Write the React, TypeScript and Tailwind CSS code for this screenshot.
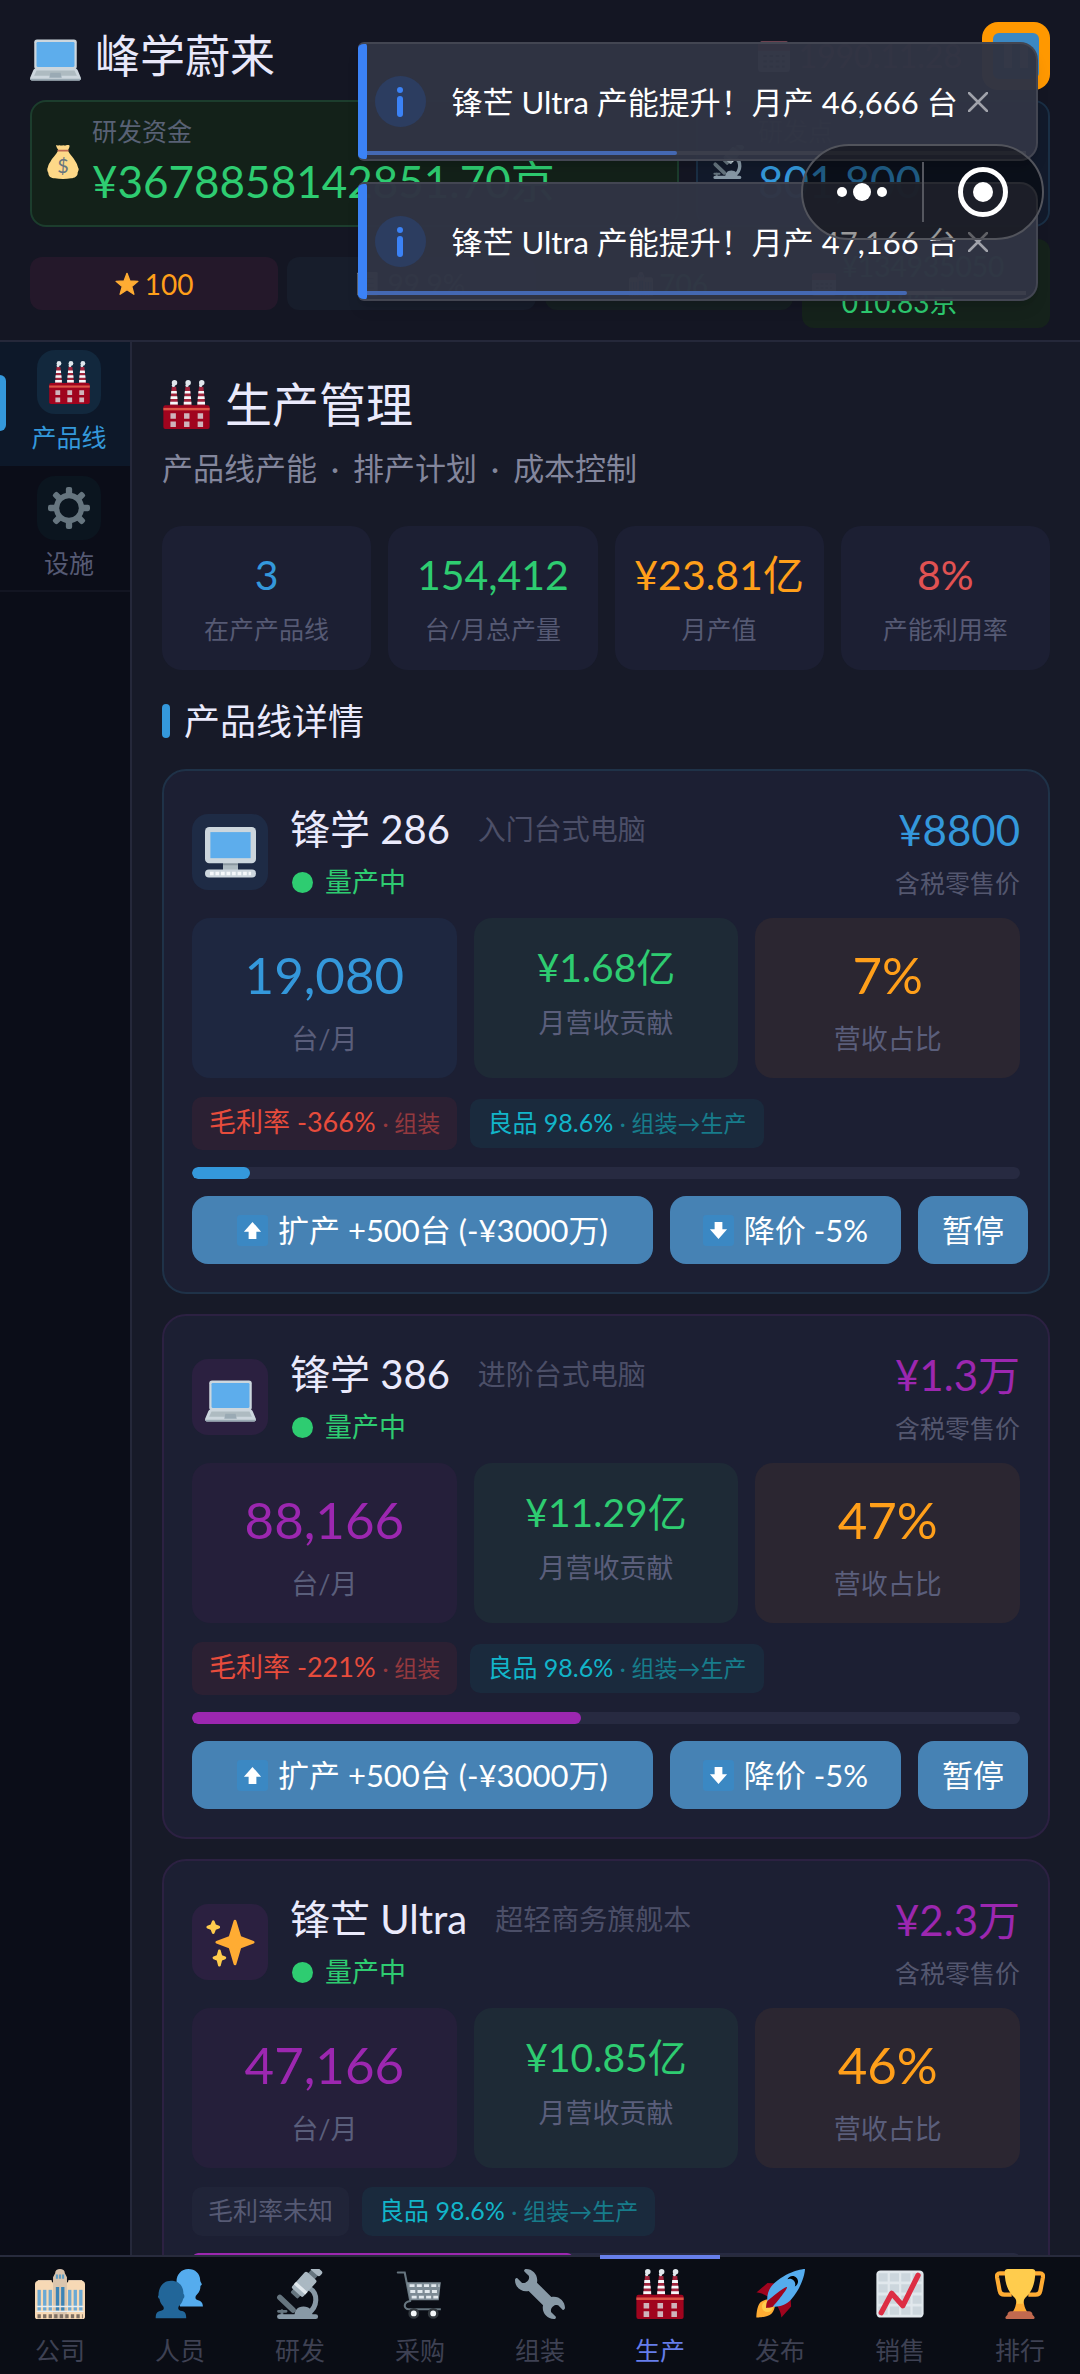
import { useState, type ReactNode } from "react";
import clsx from "clsx";

type IconProps = { className?: string };

const Emoji = ({ className, children }: { className?: string; children: ReactNode }) => (
  <svg viewBox="0 0 36 36" aria-hidden="true" className={clsx("shrink-0", className)}>
    {children}
  </svg>
);

const Laptop = ({ className }: IconProps) => (
  <Emoji className={className}>
    <rect x="3" y="6" width="30" height="21" rx="2" fill="#CCD6DD" />
    <rect x="4.6" y="7.8" width="26.800" height="17.600" rx=".8" fill="#5DADEC" />
    <path d="M4 26.500h28c1 0 1.500.8 1.900 1.800l2 4.700c.3 1.200-.6 2-1.800 2H1.900C.7 35-.2 34.200.1 33l2-4.700c.4-1 .9-1.800 1.900-1.800z" fill="#CCD6DD" />
    <path d="M4.600 27.800h26.800l1.700 3.800H2.900z" fill="#AEBBC1" />
    <path d="M14.400 29.500h7.200l.8 3.500h-8.800z" fill="#9AAAB4" />
    <path d="M0 33.700h36c-.1.800-.8 1.300-1.800 1.300H1.800c-1 0-1.700-.5-1.800-1.300z" fill="#9AAAB4" />
  </Emoji>
);

const Desktop = ({ className }: IconProps) => (
  <Emoji className={className}>
    <rect x="12.700" y="24" width="10.600" height="7" fill="#AEBBC1" />
    <rect x="12.700" y="25" width="10.600" height="2" fill="#8B98A1" />
    <rect width="36" height="25.500" rx="3" fill="#CCD6DD" />
    <rect x="3.800" y="3.600" width="28.400" height="18.400" fill="#5DADEC" />
    <rect y="30" width="36" height="5.600" rx="2.800" fill="#CCD6DD" />
    <path d="M3.500 32.800h29" stroke="#F5F8FA" strokeWidth="2.400" strokeDasharray="2.600 1.300" />
  </Emoji>
);

const Sparkles = ({ className }: IconProps) => (
  <Emoji className={className}>
    <path fill="#FFAC33" d="M34.347 16.893l-8.899-3.294-3.323-10.891c-.128-.42-.517-.708-.956-.708-.439 0-.828.288-.956.708l-3.322 10.891-8.900 3.294c-.393.146-.653.519-.653.938 0 .418.260.793.653.938l8.895 3.293 3.324 11.223c.126.424.516.715.959.715.442 0 .833-.291.959-.716l3.324-11.223 8.896-3.293c.391-.144.652-.518.652-.937 0-.418-.261-.792-.653-.938z" />
    <path fill="#FFCC4D" d="M14.347 27.894l-2.314-.856-.9-3.300c-.118-.436-.513-.738-.964-.738-.451 0-.846.302-.965.737l-.9 3.300-2.313.856c-.393.146-.653.520-.653.938 0 .418.260.792.653.938l2.301.853.907 3.622c.112.444.511.756.970.756.459 0 .858-.312.970-.757l.907-3.622 2.301-.853c.393-.144.653-.519.653-.937 0-.418-.260-.793-.653-.937zM10.009 6.231l-2.364-.875-.876-2.365c-.145-.393-.519-.653-.938-.653-.418 0-.792.260-.938.653l-.875 2.365-2.365.875c-.393.146-.653.520-.653.938 0 .418.260.793.653.938l2.365.875.875 2.365c.146.393.520.653.938.653.418 0 .792-.260.938-.653l.875-2.365 2.365-.875c.393-.146.653-.520.653-.938 0-.418-.260-.792-.653-.938z" />
  </Emoji>
);

const MoneyBag = ({ className }: IconProps) => (
  <Emoji className={className}>
    <path d="M11 0c1.500 1.200 2.500-.4 4 .4 1.500.8 2.500-.6 4 0 1.500.7 2.800-.8 5.500-.2 1.200.4-.2 3.800-1.500 5.800H13.500C12 4 10 .6 11 0z" fill="#FDD888" />
    <path d="M12.800 6h10.400c2.500 4.500 6 7 8 11.500C33 20 33.500 22.500 34 24c1.500 2-.2 4-.5 5.500.3 3.500-3 5.500-7 5.800-5 .8-12 .8-17 0-4-.3-7.200-2.300-7-5.800C1.500 28 .8 25.500 2 23.500c.5-2 1-3.500 2.500-5.500C6.500 13.500 10.500 10.500 12.800 6z" fill="#FDD888" />
    <rect x="12" y="5" width="12" height="2" rx="1" fill="#BF6952" />
    <text x="18" y="30" textAnchor="middle" fontSize="21" fontFamily="Lato, sans-serif" fill="#67757F">$</text>
  </Emoji>
);

const Microscope = ({ className }: IconProps) => (
  <Emoji className={className}>
    <path d="M3.500 20.500l9.500 9" stroke="#66757F" strokeWidth="4" strokeLinecap="round" />
    <path d="M2.500 30.500h5.500M5 30v5" stroke="#66757F" strokeWidth="2" strokeLinecap="round" />
    <path d="M25 14c6 3.500 6 13-1 18" fill="none" stroke="#8899A6" strokeWidth="3.600" />
    <path d="M14 34c0-4 2-7 6.500-7S27 30 27 34z" fill="#8899A6" />
    <rect x="1.500" y="32.500" width="29.500" height="3.500" rx="1.700" fill="#8899A6" />
    <g transform="rotate(42 21 11)">
      <rect x="17.800" y="-3.500" width="6.400" height="8" fill="#66757F" />
      <rect x="16.600" y="-4.500" width="8.800" height="4.500" rx="1.500" fill="#AAB8C2" />
      <rect x="17.500" y="17" width="7" height="5" rx="1" fill="#66757F" />
      <rect x="15.500" y="3" width="11" height="16" rx="1.500" fill="#AAB8C2" />
      <rect x="15.500" y="13.500" width="11" height="2.500" fill="#E1E8ED" />
    </g>
  </Emoji>
);

const Factory = ({ className }: IconProps) => (
  <Emoji className={className}>
    {[6, 16, 26].map((x) => (
      <g key={x}>
        <path d={`M${x + 1.200} 5h3.200l1.400 14h-6z`} fill="#A0243C" />
        <path d={`M${x + 0.800} 8h4l.2 2h-4.400zM${x + 0.400} 12h4.800l.2 2h-5.200zM${x} 16h5.600v2H${x}z`} fill="#F5F8FA" />
        <circle cx={x + 3.200} cy="2" r="2" fill="#E1E8ED" />
        <circle cx={x + 2.400} cy="4" r="1.200" fill="#E1E8ED" />
      </g>
    ))}
    <rect x="1" y="18.500" width="34" height="17.500" rx="1.500" fill="#A0041E" />
    <rect x="1" y="20.500" width="34" height="1.800" fill="#DD5547" />
    {[6.200, 16.200, 26.200].map((x) => (
      <path key={x} d={`M${x} 24.500h4v4h-4zM${x} 30.500h4v4h-4z`} fill="#CFB4BC" />
    ))}
  </Emoji>
);

const Gear = ({ className }: IconProps) => (
  <Emoji className={className}>
    {[0, 45, 90, 135, 180, 225, 270, 315].map((a) => (
      <rect key={a} x="15.300" y="0" width="5.400" height="8" rx="1.800" transform={`rotate(${a} 18 18)`} fill="#66757F" />
    ))}
    <circle cx="18" cy="18" r="10.700" fill="none" stroke="#66757F" strokeWidth="4.600" />
  </Emoji>
);

const Star = ({ className }: IconProps) => (
  <Emoji className={className}>
    <path d="M18 2l4.400 11.400 12 .6-9.300 7.600 3.200 11.800L18 26.700 7.700 33.400l3.200-11.800L1.600 14l12-.6z" fill="#FFAC33" stroke="#FFAC33" strokeWidth="2" strokeLinejoin="round" />
  </Emoji>
);

const Office = ({ className }: IconProps) => (
  <Emoji className={className}>
    <path d="M2 8h10v4H2zM24 8h10v4H24z" fill="#D9C3AE" />
    <path d="M14.500 3c0-2 1.500-3 3.500-3s3.500 1 3.500 3l1.500 3v5H13V6z" fill="#D9C3AE" />
    <path d="M0 11c0-1.500 1-2.500 2.500-2.500h9L14 11v25H1.500C.6 36 0 35.400 0 34.500zM36 11c0-1.500-1-2.500-2.500-2.500h-9L22 11v25h12.500c.9 0 1.500-.6 1.500-1.500z" fill="#F7D9B5" />
    <path d="M13 8h10v28H13z" fill="#DCC6AE" />
    <path d="M15 4h1.500v3H15zM17.200 4h1.600v3h-1.600zM19.500 4H21v3h-1.500z" fill="#5F9DC4" />
    {[1.800, 5.800, 9.800, 23.800, 27.800, 31.800].map((x) => (
      <path key={x} d={`M${x} 15h2.400v15H${x}z`} fill="#6BA9D4" />
    ))}
    <path d="M15 13h2.400v17H15zM18.800 13h2.400v17h-2.400z" fill="#3B83B5" />
    <path d="M1 27h34M1 30.500h34" stroke="#E6EEF2" strokeWidth="1" />
    <path d="M1.800 34h32.600" stroke="#7D6F63" strokeWidth="3" strokeDasharray="2.400 1.600" />
  </Emoji>
);

const People = ({ className }: IconProps) => (
  <Emoji className={className}>
    <path d="M15.500 9C15.500 4 19 0 24 0s8.500 3.500 8.500 8c0 1.200 1 2 1.200 3 0 .8-1 .8-1 1.500 0 2-.5 4-2.200 5.500-2 1.800-1.800 4 .5 4.500 2 .4 3.500 1.700 3.500 4.500H18z" fill="#55ACEE" />
    <path d="M2.500 19c0-6 3.500-10.500 9-10.500S20.500 12 20.500 18c.8.500 1 2.500-.2 3.500-.5 2.500-1.600 4-3.300 5.500-.8 2 .2 2.800 2.500 3.200 2 .4 3 1.800 3 5.300H.5c0-3.500 1-4.900 3.200-5.300 2.300-.4 3.200-1.200 2.300-3.200-1.500-1.500-2.500-3-2.800-5.500-1-.8-1.500-2-.7-2.500z" fill="#226699" />
  </Emoji>
);

const Cart = ({ className }: IconProps) => (
  <Emoji className={className}>
    <path d="M2 2.500h5l4 20.500" fill="none" stroke="#66757F" strokeWidth="1.500" strokeLinecap="round" />
    <path d="M8.500 9.500H33l-1.500 13H10.800z" fill="#7D8B95" />
    <path d="M10.500 12h21.500M11 16.200h20.500M12 20.300h19" stroke="#E1E8ED" strokeWidth="2" strokeDasharray="3.600 1.600" />
    <path d="M11 23c-3.500.5-4 2.500-4 3.500s1 2.500 3 2.500h23" fill="none" stroke="#66757F" strokeWidth="1.500" />
    <circle cx="13.500" cy="32" r="3" fill="#F5F8FA" stroke="#31373D" strokeWidth="1.800" />
    <circle cx="27.500" cy="32" r="3" fill="#F5F8FA" stroke="#31373D" strokeWidth="1.800" />
  </Emoji>
);

const Wrench = ({ className }: IconProps) => (
  <Emoji className={className}>
    <path fill="#8899A6" d="M27.989 19.977c-.622 0-1.225.078-1.806.213L15.811 9.818c.134-.581.212-1.184.212-1.806C16.023 3.587 12.436 0 8.012 0 7.110 0 5.910.916 6.909 1.915l2.997 2.997s.999 1.998-.999 3.995-3.996.998-3.996.998L1.915 6.909C.916 5.910 0 7.105 0 8.012c0 4.425 3.587 8.012 8.012 8.012.622 0 1.225-.078 1.806-.212l10.371 10.371c-.135.581-.213 1.184-.213 1.806 0 4.425 3.588 8.011 8.012 8.011.901 0 2.101-.916 1.102-1.915l-2.997-2.997s-.999-1.998.999-3.995 3.995-.999 3.995-.999l2.997 2.997c1 .999 1.916-.196 1.916-1.102 0-4.425-3.587-8.012-8.011-8.012z" />
  </Emoji>
);

const Rocket = ({ className }: IconProps) => (
  <Emoji className={className}>
    <path fill="#A0041E" d="M1 17l8-7 16 1 1 16-7 8s.001-5.999-6-12-12-6-12-6z" />
    <path fill="#FFAC33" d="M.973 35s-.036-7.979 2.985-11S15 21.187 15 21.187 14.999 29 11.999 32c-3 3-11.026 3-11.026 3z" />
    <circle fill="#FFCC4D" cx="8.999" cy="27" r="4" />
    <path fill="#55ACEE" d="M35.999 0s-10 0-22 10c-6 5-6 14-4 16s11 2 16-4c10-12 10-22 10-22z" />
    <path d="M26.999 5c-1.623 0-3.013.971-3.641 2.360.502-.227 1.055-.360 1.641-.360 2.209 0 4 1.791 4 4 0 .586-.133 1.139-.359 1.640 1.389-.627 2.359-2.017 2.359-3.640 0-2.209-1.791-4-4-4z" />
    <path fill="#A0041E" d="M8 28s0-4 1-5 13.001-10.999 14-10-9.001 13-10.001 14S8 28 8 28z" />
  </Emoji>
);

const Chart = ({ className }: IconProps) => (
  <Emoji className={className}>
    <rect x="1" y="1" width="34" height="34" rx="3" fill="#E1E8ED" />
    <path d="M2.500 6h31M2.500 14h31M2.500 22h31M2.500 30h31" stroke="#CCD6DD" strokeWidth="6" strokeDasharray="6.600 1.600" />
    <path d="M4.500 31.500L12 17.500l8 9L31 4.500" fill="none" stroke="#DD2E44" strokeWidth="3.800" strokeLinecap="round" strokeLinejoin="round" />
  </Emoji>
);

const Trophy = ({ className }: IconProps) => (
  <Emoji className={className}>
    <path d="M9 3.200H3.500C1.800 3.200 1.200 4 1.500 6l1.800 9.500c.4 2 1.500 3 3.500 3H12M27 3.200h5.500c1.700 0 2.300.8 2 2.800l-1.800 9.500c-.4 2-1.500 3-3.500 3H24" fill="none" stroke="#FFAC33" strokeWidth="3" />
    <path d="M15.500 20h5c0 6 1.200 9 3.500 12H12c2.300-3 3.500-6 3.500-12z" fill="#FFAC33" />
    <path d="M7 2c0-1.400.9-2 2.200-2h17.600C28.100 0 29 .6 29 2c0 9.500-3 15-7 18.500-1.300 1.300-1.700 3.500-1.900 4.500h-4.200c-.2-1-.6-3.200-1.900-4.500C10 17 7 11.500 7 2z" fill="#FFCC4D" />
    <path d="M9 33c0-1.600 1-2.500 2.500-2.500h13c1.500 0 2.500.9 2.500 2.500l1 1c1 1 .5 2-.8 2H8.800c-1.300 0-1.800-1-.8-2z" fill="#C1694F" />
  </Emoji>
);

const ArrowTile = ({ className, down }: IconProps & { down?: boolean }) => (
  <Emoji className={className}>
    <rect width="36" height="36" rx="4" fill="#3B88C3" />
    <path d="M18 8l10 11.500h-5.500V28h-9v-8.500H8z" fill="#fff" transform={down ? "rotate(180 18 18)" : undefined} />
  </Emoji>
);

const Calendar = ({ className }: IconProps) => (
  <Emoji className={className}>
    <rect y="2" width="36" height="34" rx="4" fill="#E0E7EC" />
    <path d="M0 12V6c0-2 2-4 4-4h28c2 0 4 2 4 4v6z" fill="#DD2F45" />
    <path d="M6 18h24M6 24h24M6 30h24" stroke="#66757F" strokeWidth="2.500" strokeDasharray="4 3" />
  </Emoji>
);

const Page = ({ className }: IconProps) => (
  <Emoji className={className}>
    <rect x="1" width="30" height="36" rx="2" fill="#E1E8ED" />
    <path d="M7 10h18M7 17h18M7 24h18" stroke="#99AAB5" strokeWidth="2" />
  </Emoji>
);

const stats = [
  { value: "3", label: "在产产品线", color: "text-[#3498db]" },
  { value: "154,412", label: "台/月总产量", color: "text-[#2ecc71]" },
  { value: "¥23.81亿", label: "月产值", color: "text-[#ff9f1a]" },
  { value: "8%", label: "产能利用率", color: "text-[#e05252]" },
];

const themes = {
  blue: { border: "border-[#1f3248]", tint: "bg-[#1e2b45]", box: "bg-[#1e2740]", text: "text-[#3498db]", bar: "bg-[#3498db]" },
  purple: { border: "border-[#2c2142]", tint: "bg-[#2b2040]", box: "bg-[#251f3a]", text: "text-[#9c27b0]", bar: "bg-[#9c27b0]" },
};

type Product = {
  name: string;
  desc: string;
  price: string;
  output: string;
  revenue: string;
  share: number;
  margin: string | null;
  theme: keyof typeof themes;
  icon: (p: IconProps) => ReactNode;
};

const products: Product[] = [
  { name: "锋学 286", desc: "入门台式电脑", price: "¥8800", output: "19,080", revenue: "¥1.68亿", share: 7, margin: "-366%", theme: "blue", icon: Desktop },
  { name: "锋学 386", desc: "进阶台式电脑", price: "¥1.3万", output: "88,166", revenue: "¥11.29亿", share: 47, margin: "-221%", theme: "purple", icon: Laptop },
  { name: "锋芒 Ultra", desc: "超轻商务旗舰本", price: "¥2.3万", output: "47,166", revenue: "¥10.85亿", share: 46, margin: null, theme: "purple", icon: Sparkles },
];

const tabs = [
  { label: "公司", icon: Office },
  { label: "人员", icon: People },
  { label: "研发", icon: Microscope },
  { label: "采购", icon: Cart },
  { label: "组装", icon: Wrench },
  { label: "生产", icon: Factory },
  { label: "发布", icon: Rocket },
  { label: "销售", icon: Chart },
  { label: "排行", icon: Trophy },
];

const Header = () => (
  <header className="shrink-0 border-b-2 border-[#25283a] bg-[#141623] px-[30px] pt-[22px] pb-3">
    <div className="flex items-center">
      <Laptop className="size-[51px]" />
      <h1 className="ml-[14px] text-[45px] leading-[60px] text-[#e8e8fa]">峰学蔚来</h1>
      <div className="ml-auto flex items-center gap-2 text-[32px] text-[#a04a52]">
        <Calendar className="size-8" />
        <span>1990.11.28</span>
      </div>
      <button aria-label="暂停游戏" className="ml-5 flex size-[68px] items-center justify-center rounded-2xl bg-[#ff9800]">
        <span className="flex size-[46px] items-center justify-center gap-2 rounded-md bg-[#3b88c3]">
          <span className="h-6 w-2 bg-white" />
          <span className="h-6 w-2 bg-white" />
        </span>
      </button>
    </div>

    <div className="mt-[10px] grid grid-cols-[11fr_6fr] gap-[17px]">
      <div className="flex h-[127px] items-center gap-3 rounded-2xl border-2 border-[#1c3d2d] bg-[#132119] pb-1 pl-[14px]">
        <MoneyBag className="size-[34px]" />
        <div>
          <p className="text-[25px] leading-[38px] text-[#596175]">研发资金</p>
          <p className="text-[44px] leading-[62px] text-[#2ecc71]">¥3678858142851.70京</p>
        </div>
      </div>
      <div className="flex h-[127px] items-center gap-3 rounded-2xl border-2 border-[#1a2f45] bg-[#121a2b] pb-1 pl-[14px]">
        <Microscope className="size-[34px]" />
        <div>
          <p className="text-[25px] leading-[38px] text-[#596175]">研发点</p>
          <p className="text-[44px] leading-[62px] text-[#3498db]">801,800</p>
        </div>
      </div>
    </div>

    <div className="mt-3 grid grid-cols-4 items-center gap-[9px] text-[28px]">
      <div className="flex h-[53px] items-center justify-center gap-[6px] rounded-xl bg-[#24182a] text-[#ff9f1a]">
        <Star className="size-6" />
        100
      </div>
      <div className="flex h-[53px] items-center justify-center gap-[6px] rounded-xl bg-[#171d2b] text-[#7f8ba0]">
        <Page className="size-6" />
        99.9%
      </div>
      <div className="flex h-[53px] items-center justify-center gap-[6px] rounded-xl bg-[#161f22] text-[#2ecc71]">
        <Office className="size-6" />
        706
      </div>
      <div className="flex h-[89px] items-center gap-[6px] rounded-xl bg-[#15221b] pr-10 pl-[10px] text-[#2ecc71]">
        <Calendar className="size-6" />
        <span className="leading-[36px] break-all">¥134935050010.83京</span>
      </div>
    </div>
  </header>
);

const Sidebar = () => (
  <nav className="w-[132px] shrink-0 border-r-2 border-[#25283a] bg-[#0b0d18]">
    <button className="relative flex h-[124px] w-full flex-col items-center bg-[#0d1829] pt-2 pl-2">
      <span className="absolute top-[33px] left-0 h-14 w-[6px] rounded-r-md bg-[#3498db]" />
      <span className="flex size-16 items-center justify-center rounded-[18px] bg-[#12283d]">
        <Factory className="size-[43px]" />
      </span>
      <span className="mt-1 text-[25px] leading-[38px] text-[#3498db]">产品线</span>
    </button>
    <button className="flex h-[126px] w-full flex-col items-center border-b-2 border-[#131522] pt-[10px] pl-2">
      <span className="flex size-16 items-center justify-center rounded-[18px] bg-[#0b151f]">
        <Gear className="size-[42px]" />
      </span>
      <span className="mt-1 text-[25px] leading-[38px] text-[#565a74]">设施</span>
    </button>
  </nav>
);

const Metric = ({ value, label, className, valueClass }: { value: string; label: string; className: string; valueClass: string }) => (
  <div className={clsx("h-40 rounded-[18px] pt-5 text-center", className)}>
    <p className={valueClass}>{value}</p>
    <p className="mt-2 text-[27px] leading-[38px] text-[#5a5e7b]">{label}</p>
  </div>
);

const ProductCard = ({ product }: { product: Product }) => {
  const theme = themes[product.theme];
  const Icon = product.icon;

  return (
    <article className={clsx("rounded-3xl border-2 bg-[#1c1f33] p-7", theme.border)}>
      <div className="flex h-[106px] items-center">
        <div className={clsx("flex size-[76px] shrink-0 items-center justify-center rounded-2xl", theme.tint)}>
          <Icon className="size-[51px]" />
        </div>
        <div className="ml-[22px]">
          <h3 className="flex items-center gap-7 text-[40px] leading-[60px] text-[#eaeafc]">
            {product.name}
            <small className="text-[28px] text-[#4c4f68]">{product.desc}</small>
          </h3>
          <p className="flex items-center gap-3 pl-[2px] text-[27px] leading-[46px] text-[#2ecc71]">
            <span className="size-[21px] rounded-full bg-[#2ecc71]" />
            量产中
          </p>
        </div>
        <div className="ml-auto text-right">
          <p className={clsx("text-[42px] leading-[62px]", theme.text)}>{product.price}</p>
          <p className="text-[25px] leading-[44px] text-[#54576f]">含税零售价</p>
        </div>
      </div>

      <div className="mt-[13px] grid grid-cols-3 gap-[17px]">
        <Metric value={product.output} label="台/月" className={theme.box} valueClass={clsx("text-[51px] leading-[74px]", theme.text)} />
        <Metric value={product.revenue} label="月营收贡献" className="bg-[#1e2a36]" valueClass="text-[39px] leading-[58px] text-[#2ecc71]" />
        <Metric value={`${product.share}%`} label="营收占比" className="bg-[#2b2631]" valueClass="text-[51px] leading-[74px] text-[#ff9f1a]" />
      </div>

      <div className="mt-[19px] flex items-center gap-[13px]">
        {product.margin ? (
          <span className="h-[53px] rounded-[10px] bg-[#2b2033] px-[17px] text-[27px] leading-[50px] text-[#e74c3c]">
            毛利率 {product.margin} <span className="text-[23px] text-[#94393f]">· 组装</span>
          </span>
        ) : (
          <span className="h-[49px] rounded-[10px] bg-[#202438] px-4 text-[25px] leading-[47px] text-[#565a74]">毛利率未知</span>
        )}
        <span className="h-[49px] rounded-[10px] bg-[#1a2a3d] px-[17px] text-[25px] leading-[47px] text-[#12b5c9]">
          良品 98.6% <span className="text-[23px] text-[#177c8b]">· 组装→生产</span>
        </span>
      </div>

      <div className="mt-[17px] h-3 overflow-hidden rounded-full bg-[#272a41]">
        <div className={clsx("h-full rounded-full", theme.bar)} style={{ width: `${product.share}%` }} />
      </div>

      <div className="mt-[17px] -mr-2 flex h-[68px] gap-[17px] text-[31px] leading-[66px] whitespace-nowrap text-white">
        <button className="flex grow items-center justify-center gap-[10px] rounded-2xl bg-[#4682b4] px-6">
          <ArrowTile className="size-[31px]" />
          扩产 +500台 (-¥3000万)
        </button>
        <button className="flex items-center gap-[10px] rounded-2xl bg-[#4682b4] px-[33px]">
          <ArrowTile className="size-[31px]" down />
          降价 -5%
        </button>
        <button className="rounded-2xl bg-[#4682b4] px-6">暂停</button>
      </div>
    </article>
  );
};

const TabBar = () => {
  const [active, setActive] = useState<string>("生产");

  return (
    <nav className="relative z-10 grid shrink-0 grid-cols-9 border-t-2 border-[#282b3d] bg-[#0a0d15]">
      {tabs.map(({ label, icon: Icon }) => (
        <button key={label} onClick={() => setActive(label)} className="relative flex h-[117px] flex-col items-center pt-3">
          {active === label && <span className="absolute -top-[2px] h-1 w-full bg-[#667eea]" />}
          <Icon className="size-[50px]" />
          <span className={clsx("mt-3 text-[25px] leading-[38px]", active === label ? "text-[#667eea]" : "text-[#3e4153]")}>{label}</span>
        </button>
      ))}
    </nav>
  );
};

const Toast = ({ text, progress, onClose }: { text: string; progress: number; onClose: () => void }) => (
  <div className="relative flex h-[119px] items-center overflow-hidden rounded-l-md rounded-r-[18px] border-2 border-l-0 border-[#434652] bg-[#303443]/98 shadow-lg">
    <span className="h-[119px] w-[9px] shrink-0 rounded-md bg-[#3b82f6]" />
    <span className="ml-2 flex size-[51px] shrink-0 items-center justify-center rounded-full bg-[#2c3d60]">
      <svg viewBox="0 0 6 30" aria-hidden="true" className="h-[30px] w-[6px]">
        <circle cx="3" cy="3" r="3" fill="#3b82f6" />
        <rect y="9" width="6" height="21" rx="3" fill="#3b82f6" />
      </svg>
    </span>
    <p className="ml-[26px] text-[31px] leading-[44px] whitespace-nowrap text-white">{text}</p>
    <button aria-label="关闭" onClick={onClose} className="absolute right-12">
      <svg viewBox="0 0 20 20" className="size-5">
        <path d="M1 1l18 18M19 1L1 19" stroke="#a0a2aa" strokeWidth="2.500" strokeLinecap="round" />
      </svg>
    </button>
    <div className="absolute right-[10px] bottom-[4px] left-[9px] h-1 bg-[#3b3e4b]">
      <div className="h-full rounded-r-full bg-[#4468b2]" style={{ width: `${progress}%` }} />
    </div>
  </div>
);

export default function App() {
  const [toasts, setToasts] = useState([
    { id: 1, text: "锋芒 Ultra 产能提升！月产 46,666 台", progress: 47 },
    { id: 2, text: "锋芒 Ultra 产能提升！月产 47,166 台", progress: 82 },
  ]);

  return (
    <div className="relative flex h-screen flex-col overflow-hidden bg-[#171a28] font-[Lato,'Noto_Sans_CJK_SC',sans-serif]">
      <Header />

      <div className="flex min-h-0 grow">
        <Sidebar />
        <main className="min-w-0 grow overflow-hidden px-[30px] pt-[30px]">
          <h2 className="flex items-center gap-[14px] text-[47px] leading-[64px] text-[#eaeafc]">
            <Factory className="size-[49px]" />
            生产管理
          </h2>
          <p className="mt-[10px] text-[31px] leading-[44px] text-[#83869c]">
            产品线产能<span className="mx-[14px]">·</span>排产计划<span className="mx-[14px]">·</span>成本控制
          </p>

          <div className="mt-9 grid grid-cols-4 gap-[17px]">
            {stats.map((stat) => (
              <div key={stat.label} className="h-36 rounded-[20px] bg-[#1c1f33] pt-[18px] text-center">
                <p className={clsx("text-[41px] leading-[62px]", stat.color)}>{stat.value}</p>
                <p className="mt-1 text-[25px] leading-[38px] text-[#565a74]">{stat.label}</p>
              </div>
            ))}
          </div>

          <h2 className="mt-6 flex items-center gap-[14px] text-[36px] leading-[54px] text-[#eaeafc]">
            <span className="h-[34px] w-2 rounded-sm bg-[#3498db]" />
            产品线详情
          </h2>

          <div className="mt-[21px] flex flex-col gap-5">
            {products.map((product) => (
              <ProductCard key={product.name} product={product} />
            ))}
          </div>
        </main>
      </div>

      <TabBar />

      <div className="absolute top-[42px] right-[42px] z-20 flex w-[63%] flex-col gap-[21px]">
        {toasts.map((toast) => (
          <Toast key={toast.id} text={toast.text} progress={toast.progress} onClose={() => setToasts(toasts.filter((t) => t.id !== toast.id))} />
        ))}
      </div>

      {/* mini program capsule */}
      <div className="absolute top-36 right-9 z-30 flex h-24 w-[243px] items-center rounded-full border-2 border-[#52545c] bg-black/40">
        <button aria-label="更多" className="flex grow items-center justify-center gap-[6px]">
          <span className="size-[10px] rounded-full bg-white" />
          <span className="size-[18px] rounded-full bg-white" />
          <span className="size-[10px] rounded-full bg-white" />
        </button>
        <span className="h-[60px] w-[2px] bg-[#55575f]" />
        <button aria-label="关闭小程序" className="flex grow items-center justify-center">
          <span className="flex size-[50px] items-center justify-center rounded-full border-[5px] border-white">
            <span className="size-5 rounded-full bg-white" />
          </span>
        </button>
      </div>
    </div>
  );
}
